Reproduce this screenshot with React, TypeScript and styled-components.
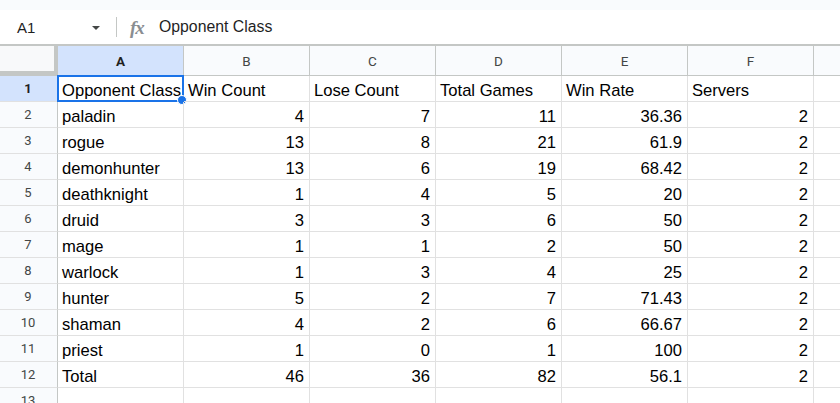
import styled, { createGlobalStyle } from 'styled-components'

const GlobalStyle = createGlobalStyle`
  html, body {
    margin: 0;
    padding: 0;
    background: #ffffff;
  }
  body {
    font-family: 'Liberation Sans', Arial, sans-serif;
    color: #000000;
  }
`

const columns = ['A', 'B', 'C', 'D', 'E', 'F', 'G']

type Cell = string | number

const rows: Cell[][] = [
  ['Opponent Class', 'Win Count', 'Lose Count', 'Total Games', 'Win Rate', 'Servers'],
  ['paladin', 4, 7, 11, 36.36, 2],
  ['rogue', 13, 8, 21, 61.9, 2],
  ['demonhunter', 13, 6, 19, 68.42, 2],
  ['deathknight', 1, 4, 5, 20, 2],
  ['druid', 3, 3, 6, 50, 2],
  ['mage', 1, 1, 2, 50, 2],
  ['warlock', 1, 3, 4, 25, 2],
  ['hunter', 5, 2, 7, 71.43, 2],
  ['shaman', 4, 2, 6, 66.67, 2],
  ['priest', 1, 0, 1, 100, 2],
  ['Total', 46, 36, 82, 56.1, 2],
  ['', '', '', '', '', ''],
]

const App = () => {
  return (
    <Page>
      <GlobalStyle />
      <TopStrip />
      <FormulaBar>
        <NameBox>
          <span>A1</span>
          <Caret width='8' height='4' viewBox='0 0 8 4'>
            <path d='M0 0 L8 0 L4 4 Z' fill='#444746' />
          </Caret>
        </NameBox>
        <Separator />
        <FxIcon>fx</FxIcon>
        <FormulaText>Opponent Class</FormulaText>
      </FormulaBar>

      <Sheet>
        <Corner />
        {columns.map((col) => (
          <ColHeader key={col} $active={col === 'A'}>
            {col}
          </ColHeader>
        ))}

        {rows.map((row, r) => (
          <Row key={r}>
            <RowHeader $active={r === 0}>{r + 1}</RowHeader>
            {row.map((value, c) => (
              <DataCell key={c} $numeric={typeof value === 'number'}>
                {value}
                {r === 0 && c === 0 && (
                  <Selection>
                    <Handle />
                  </Selection>
                )}
              </DataCell>
            ))}
            <DataCell $numeric={false} />
          </Row>
        ))}
      </Sheet>
    </Page>
  )
}

const Page = styled.div`
  width: 840px;
  height: 403px;
  overflow: hidden;
  background: #ffffff;
`

const TopStrip = styled.div`
  height: 10px;
  background: #f9fbfd;
`

const FormulaBar = styled.div`
  height: 34px;
  display: flex;
  align-items: center;
  background: #ffffff;
  border-bottom: 2px solid #c4c7c5;
`

const NameBox = styled.div`
  width: 100px;
  box-sizing: border-box;
  padding: 0 0 0 17px;
  display: flex;
  align-items: center;
  justify-content: space-between;
  font-size: 15px;
  color: #1f1f1f;
`

const Caret = styled.svg`
  display: block;
  margin-top: 1px;
`

const Separator = styled.div`
  width: 1px;
  height: 20px;
  background: #c4c7c5;
  margin: 0 13px 0 16px;
`

const FxIcon = styled.span`
  font-family: 'Liberation Serif', 'Times New Roman', serif;
  font-style: italic;
  font-weight: 700;
  font-size: 19px;
  letter-spacing: -1px;
  color: #8a8e92;
  width: 29px;
  line-height: 1;
`

const FormulaText = styled.span`
  font-size: 15.8px;
  color: #1f1f1f;
`

const Sheet = styled.div`
  display: grid;
  grid-template-columns: 58px repeat(7, 126px);
  grid-auto-rows: 26px;
  grid-template-rows: 30px;
`

const Row = styled.div`
  display: contents;
`

const Corner = styled.div`
  background: #f8f9fa;
  border-right: 4px solid #c4c7c5;
  border-bottom: 5px solid #c4c7c5;
`

const ColHeader = styled.div<{ $active: boolean }>`
  display: flex;
  align-items: center;
  justify-content: center;
  font-family: Roboto, 'Liberation Sans', sans-serif;
  font-size: 13.5px;
  font-weight: ${(p) => (p.$active ? 700 : 400)};
  color: ${(p) => (p.$active ? '#1f1f1f' : '#444746')};
  background: ${(p) => (p.$active ? '#d3e3fd' : '#f9fbfd')};
  border-right: 1px solid #c4c7c5;
  border-bottom: 1px solid #c4c7c5;
`

const RowHeader = styled.div<{ $active: boolean }>`
  display: flex;
  align-items: center;
  justify-content: center;
  padding-right: 1px;
  font-family: Roboto, 'Liberation Sans', sans-serif;
  font-size: 13px;
  font-weight: ${(p) => (p.$active ? 700 : 400)};
  color: ${(p) => (p.$active ? '#1f1f1f' : '#444746')};
  background: ${(p) => (p.$active ? '#d3e3fd' : '#f9fbfd')};
  border-right: 1px solid #c4c7c5;
  border-bottom: 1px solid #e1e1e1;
`

const DataCell = styled.div<{ $numeric: boolean }>`
  position: relative;
  display: flex;
  align-items: flex-end;
  justify-content: ${(p) => (p.$numeric ? 'flex-end' : 'flex-start')};
  padding: 0 5px 1px 4px;
  font-size: 16.6px;
  line-height: 19px;
  white-space: nowrap;
  color: #000000;
  border-right: 1px solid #e1e1e1;
  border-bottom: 1px solid #e1e1e1;
`

const Selection = styled.div`
  position: absolute;
  top: -1px;
  left: -1px;
  right: -1px;
  bottom: -1px;
  border: 2px solid #1a73e8;
  pointer-events: none;
`

const Handle = styled.div`
  position: absolute;
  right: -5px;
  bottom: -5px;
  width: 8px;
  height: 8px;
  border-radius: 50%;
  background: #1a73e8;
  border: 1px solid #ffffff;
`

export default App
